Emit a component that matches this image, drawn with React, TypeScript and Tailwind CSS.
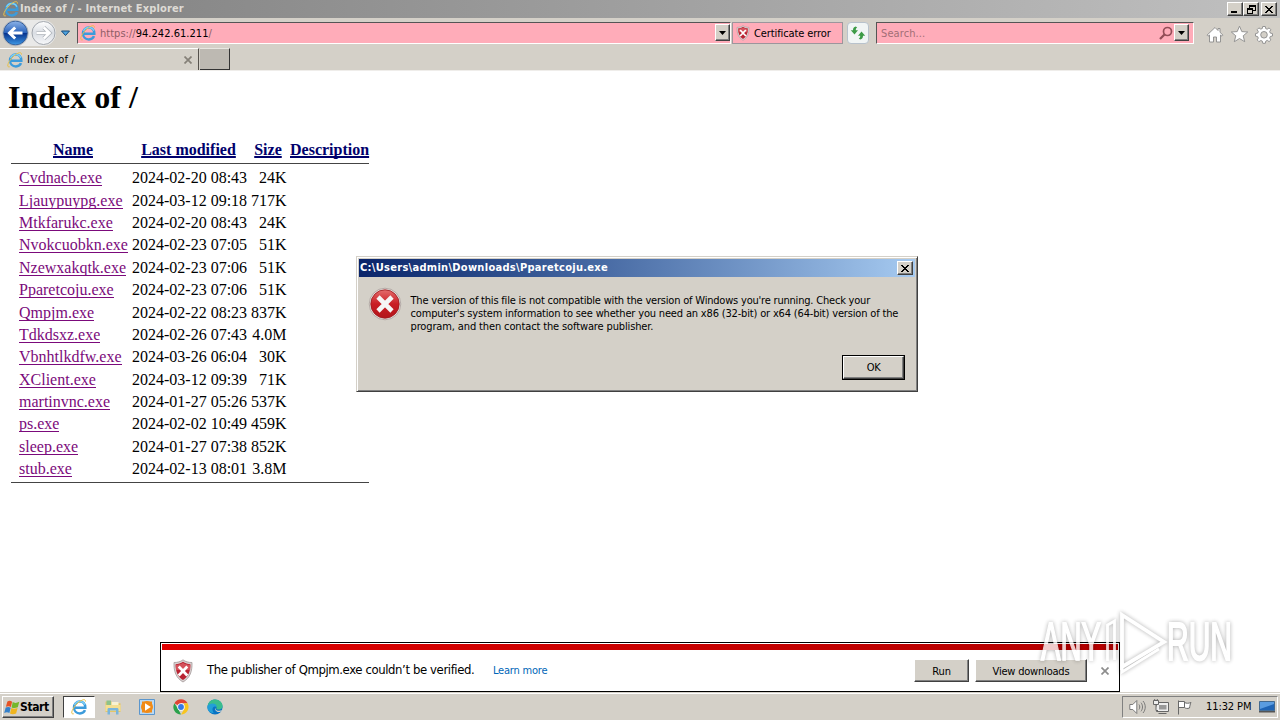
import React from "react";

interface FileRow {
  name: string;
  modified: string;
  size: string;
}

const files: FileRow[] = [
  { name: "Cvdnacb.exe", modified: "2024-02-20 08:43", size: "24K" },
  { name: "Ljauypuypg.exe", modified: "2024-03-12 09:18", size: "717K" },
  { name: "Mtkfarukc.exe", modified: "2024-02-20 08:43", size: "24K" },
  { name: "Nvokcuobkn.exe", modified: "2024-02-23 07:05", size: "51K" },
  { name: "Nzewxakqtk.exe", modified: "2024-02-23 07:06", size: "51K" },
  { name: "Pparetcoju.exe", modified: "2024-02-23 07:06", size: "51K" },
  { name: "Qmpjm.exe", modified: "2024-02-22 08:23", size: "837K" },
  { name: "Tdkdsxz.exe", modified: "2024-02-26 07:43", size: "4.0M" },
  { name: "Vbnhtlkdfw.exe", modified: "2024-03-26 06:04", size: "30K" },
  { name: "XClient.exe", modified: "2024-03-12 09:39", size: "71K" },
  { name: "martinvnc.exe", modified: "2024-01-27 05:26", size: "537K" },
  { name: "ps.exe", modified: "2024-02-02 10:49", size: "459K" },
  { name: "sleep.exe", modified: "2024-01-27 07:38", size: "852K" },
  { name: "stub.exe", modified: "2024-02-13 08:01", size: "3.8M" },
];

const raised =
  "border border-t-white border-l-white border-r-[#404040] border-b-[#404040] bg-[#d4d0c8] shadow-[inset_-1px_-1px_0_#808080]";

const IeIcon = ({ className }: { className?: string }) => (
  <svg viewBox="0 0 16 16" className={className} fill="none">
    <path
      d="M4 8.700h10.300C14.300 4.900 12 2.600 8.800 2.600 5.400 2.600 3 5.100 3 8.400c0 3.500 2.500 6 5.900 6 2.600 0 4.300-1.200 5.100-3.300"
      stroke="#3c9bdb"
      strokeWidth="2.500"
    />
    <path d="M3.500 6.200C4.500 3.800 6.500 2.500 8.800 2.500c2.400 0 4.200 1.200 5 3.200" stroke="#7fd0f5" strokeWidth="1.300" />
    <path
      d="M2.800 14.800c-1.500.4-2.300-.2-2-1.800C1.400 9.300 6.800 2.900 11.400 1c2-.8 3.300-.3 3 1.600"
      stroke="#e8c04a"
      strokeWidth="1"
    />
  </svg>
);

const ShieldIcon = ({ className }: { className?: string }) => (
  <svg viewBox="0 0 20 24" className={className}>
    <path
      d="M10 .8c2.500 2 5.500 2.700 9 2.700.3 9-2 15.500-9 19.500C3 19 .7 12.500 1 3.500c3.500 0 6.500-.7 9-2.700z"
      fill="#d9d2d2"
      stroke="#a59a9a"
      strokeWidth=".8"
    />
    <path
      d="M10 2.800c2.200 1.500 4.600 2.200 7.400 2.400 0 7.400-2.200 12.600-7.400 15.900C4.800 17.800 2.600 12.600 2.600 5.200 5.400 5 7.800 4.300 10 2.800z"
      fill="#b92332"
    />
    <path d="M2.800 6C5.500 5.800 8 5 10 3.700c2 1.300 4.500 2.100 7.200 2.300v5H3.100z" fill="#d5525c" />
    <path d="m5.700 7.500 8.600 9m0-9-8.600 9" stroke="#fff" strokeWidth="2.700" />
  </svg>
);

const CloseGlyph = () => (
  <svg viewBox="0 0 8 7" className="h-[7px] w-2" shapeRendering="crispEdges">
    <path d="M0 0h2v1H0zM6 0h2v1H6zM1 1h2v1H1zM5 1h2v1H5zM2 2h4v1H2zM3 3h2v1H3zM2 4h4v1H2zM1 5h2v1H1zM5 5h2v1H5zM0 6h2v1H0zM6 6h2v1H6z" />
  </svg>
);

const DropButton = () => (
  <div className={`flex h-[17px] w-[15px] items-center justify-center ${raised}`}>
    <svg viewBox="0 0 7 4" className="h-1 w-[7px]">
      <path d="M0 0h7L3.500 4z" />
    </svg>
  </div>
);

const TitleBar = () => (
  <div className="flex h-[18px] items-center bg-linear-to-r from-[#808080] to-[#c0c0c0] pr-[3px] pl-[3px]">
    <IeIcon className="mr-px h-4 w-4" />
    <span className="flex-1 pt-px text-[11px] font-bold tracking-[0.15px] text-[#dedbd5]">
      Index of / - Internet Explorer
    </span>
    <div className={`flex h-[14px] w-4 items-end pb-[2px] pl-[3px] ${raised}`}>
      <div className="h-[2px] w-[6px] bg-black" />
    </div>
    <div className={`flex h-[14px] w-4 items-center justify-center ${raised}`}>
      <svg viewBox="0 0 9 9" className="h-[9px] w-[9px]" fill="none" stroke="#000" shapeRendering="crispEdges">
        <path d="M2.500 3V.5h6v5H6M2 1.500h7M.5 3.500h5v5h-5zM0 4.500h6" />
      </svg>
    </div>
    <div className={`ml-[2px] flex h-[14px] w-4 items-center justify-center ${raised}`}>
      <CloseGlyph />
    </div>
  </div>
);

const NavButtons = () => (
  <svg viewBox="0 0 76 29" className="h-[29px] w-[76px] shrink-0">
    <defs>
      <linearGradient id="back" x2="0" y2="1">
        <stop offset="0" stopColor="#8eb4e8" />
        <stop offset=".48" stopColor="#2c65bd" />
        <stop offset=".52" stopColor="#07348f" />
        <stop offset="1" stopColor="#3f9ae6" />
      </linearGradient>
      <linearGradient id="fwd" x2="0" y2="1">
        <stop offset="0" stopColor="#fff" />
        <stop offset=".5" stopColor="#d9dde3" />
        <stop offset="1" stopColor="#f7f8fa" />
      </linearGradient>
    </defs>
    <path d="M15 2h28a13 13 0 0 1 0 26H15z" fill="#e9e9e8" />
    <circle cx="15.500" cy="15" r="12" fill="url(#back)" stroke="#315b97" />
    <circle cx="15.500" cy="15" r="12.800" fill="none" stroke="#a9afb8" strokeWidth=".8" />
    <path d="M22.500 15H10m5.200-5.500L9.500 15l5.700 5.500" fill="none" stroke="#fff" strokeWidth="3" />
    <circle cx="43.500" cy="15" r="11.500" fill="url(#fwd)" stroke="#a2a7ae" />
    <path
      d="M36.500 15H49m-5.200-5.500 5.700 5.500-5.700 5.500"
      fill="none"
      stroke="#abb0b7"
      strokeWidth="4"
    />
    <path d="M36.500 15H49m-5.200-5.500 5.700 5.500-5.700 5.500" fill="none" stroke="#fff" strokeWidth="2.600" />
    <path d="M61.500 13h8L65.500 17.500z" fill="#4da3e0" stroke="#174a78" />
  </svg>
);

const inset = "border border-t-[#555] border-l-[#555] border-r-white border-b-white";

const AddressBar = () => (
  <div className="flex h-[29px] items-center">
    <NavButtons />
    <div className={`ml-px flex h-[22px] w-[654px] items-center bg-[#ffacb9] pl-px ${inset}`}>
      <IeIcon className="mr-1 ml-px h-4 w-4" />
      <span className="flex-1 pt-[3px] text-[11px] tracking-[0.03px] text-[#8d5d65]">
        https://<span className="text-black">94.242.61.211</span>/
      </span>
      <DropButton />
    </div>
    <div className="ml-px flex h-[22px] w-[111px] items-center border border-[#9c959c] bg-[#ffacb9] pl-[3px]">
      <ShieldIcon className="h-4 w-[14px]" />
      <span className="ml-1 pt-[3px] text-[11px] tracking-[-0.1px]">Certificate error</span>
    </div>
    <div className="ml-1 flex h-[22px] w-[22px] items-center justify-center rounded-sm border border-[#b8c2cc] bg-[#f1f5f5]">
      <svg viewBox="0 0 16 14" className="h-[14px] w-4" fill="#3d9b46">
        <path d="M5.800.5C3.800.7 3 2.200 3 4.200H.8l3.700 4.300L8 4.200H5.800c0-1.500.3-2 1.400-2.600z" />
        <path d="M10.200 13.500c2-.2 2.800-1.700 2.800-3.700h2.200L11.500 5.500 8 9.800h2.200c0 1.500-.3 2-1.400 2.600z" />
      </svg>
    </div>
    <div className={`ml-[7px] flex h-[22px] w-[318px] items-center bg-[#ffacb9] pr-1 pl-1 ${inset}`}>
      <span className="flex-1 pt-[3px] text-[11px] tracking-[0.1px] text-[#a26e76]">Search...</span>
      <svg viewBox="0 0 14 14" className="mr-px h-[14px] w-[14px]" fill="none" stroke="#934d57">
        <circle cx="8.500" cy="5.500" r="4" strokeWidth="1.700" />
        <path d="m5.500 8.500-4.500 4.500" strokeWidth="2.300" />
      </svg>
      <DropButton />
    </div>
    <svg
      viewBox="0 0 72 20"
      className="mt-[3px] ml-[9px] h-5 w-[72px]"
      fill="#fff"
      stroke="#8b8b8b"
      strokeWidth=".9"
    >
      <path d="M12 3.500 4 11.200l1 1 1.500-1.200v7h4v-5h3v5h4v-7l1.500 1.200 1-1-3-2.900V4.500h-2v2z" />
      <path d="m36.500 2.200 2.300 5.400 5.900.4-4.500 3.800 1.500 5.900-5.200-3.200-5.200 3.200 1.500-5.900L28.300 8l5.900-.4z" />
      <path d="M59.700 2.500h2.600l.4 2.100 1.500.6 1.900-1.300 1.700 1.800-1.100 1.900.6 1.500 2.200.5V12l-2.200.5-.6 1.500 1.200 1.900-1.800 1.700-1.800-1.200-1.500.7-.5 2.200h-2.500l-.5-2.200-1.500-.6-1.900 1.200-1.700-1.800 1.100-1.800-.6-1.500-2.200-.5V9.600l2.200-.5.6-1.500-1.200-1.900 1.800-1.800 1.900 1.200 1.500-.6z" />
      <circle cx="61" cy="10.800" r="3.300" fill="#d4d0c8" />
    </svg>
  </div>
);

const TabBar = () => (
  <div className="flex h-[24px] items-start border-b border-[#efedea] pt-px">
    <div className="flex h-[22px] w-[199px] items-center border-t border-r border-t-white border-r-[#55514c] pl-[7px]">
      <IeIcon className="h-4 w-4" />
      <span className="ml-1 flex-1 pt-[2px] text-[11px] tracking-[0.15px]">Index of /</span>
      <svg viewBox="0 0 8 8" className="mr-[6px] h-2 w-2" stroke="#858078" strokeWidth="1.700">
        <path d="m.5.5 7 7m0-7-7 7" />
      </svg>
    </div>
    <div className="ml-px h-[22px] w-[30px] border-r border-b border-t border-t-[#e9e7e2] border-r-[#333] border-b-[#333] bg-[#bdb9b2]" />
  </div>
);

const headerLink =
  "text-center font-bold text-[#00006c] underline decoration-2 [text-decoration-skip-ink:none]";

const DirectoryListing = () => (
  <div className="pt-[6px] pl-2 font-['Liberation_Serif',serif] text-[16px]">
    <h1 className="text-[32px] leading-[40px] font-bold">Index of /</h1>
    <div className="mt-[21px] ml-[3px] w-[358px]">
      <div className="grid h-[26px] grid-cols-[108px_115px_36px_79px] items-center gap-1 border-b border-[#444] pb-px pl-2">
        <span className={headerLink}>Name</span>
        <span className={headerLink}>Last modified</span>
        <span className={headerLink}>Size</span>
        <span className={headerLink}>Description</span>
      </div>
      <div className="border-b border-[#444] pt-[3px] pb-[2px]">
        {files.map((file) => (
          <div
            key={file.name}
            className="grid h-[22.4px] grid-cols-[109px_115px_35.5px] items-center gap-1 pl-2 leading-[18px] whitespace-nowrap"
          >
            <span className="mb-px h-[17px] justify-self-start overflow-hidden border-b border-[#7b0a7b] text-[#7b0a7b]">
              {file.name}
            </span>
            <span>{file.modified}</span>
            <span className="text-right">{file.size}</span>
          </div>
        ))}
      </div>
    </div>
  </div>
);

const DownloadBar = () => (
  <div className="mx-auto mt-auto h-[50px] w-[960px] border border-black bg-white p-px">
    <div className="h-[6px] bg-linear-to-r from-[#e00000] to-[#b40000]" />
    <div className="flex h-[41px] items-center pl-[10px]">
      <ShieldIcon className="h-6 w-[22px]" />
      <span className="ml-[13px] w-[286px] pb-[2px] text-[13px] tracking-[-0.4px] whitespace-nowrap">
        The publisher of Qmpjm.exe couldn’t be verified.
      </span>
      <span className="flex-1 pt-px text-[11px] tracking-[-0.2px] text-[#0066b8]">Learn more</span>
      <button className={`h-[23px] w-[55px] pt-[3px] text-[11px] tracking-[-0.1px] ${raised}`}>Run</button>
      <button className={`ml-[6px] h-[23px] w-[112px] pt-[3px] text-[11px] tracking-[-0.2px] ${raised}`}>
        View downloads
      </button>
      <svg viewBox="0 0 8 8" className="mr-[9px] ml-[14px] h-2 w-2" stroke="#8d8d8d" strokeWidth="1.700">
        <path d="m.5.5 7 7m0-7-7 7" />
      </svg>
    </div>
  </div>
);

const ErrorDialog = () => (
  <div className="absolute top-[256px] left-[356px] h-[136px] w-[562px] border border-t-[#d4d0c8] border-r-[#404040] border-b-[#404040] border-l-[#d4d0c8] bg-[#d4d0c8] p-[2px] shadow-[inset_1px_1px_0_#fff,inset_-1px_-1px_0_#808080]">
    <div className="flex h-[18px] items-center bg-linear-to-r from-[#0a246a] to-[#a6caf0] pr-[2px] pl-px">
      <span className="flex-1 pt-px text-[11px] font-bold tracking-[0.29px] text-white">
        C:\Users\admin\Downloads\Pparetcoju.exe
      </span>
      <div className={`flex h-[14px] w-4 items-center justify-center ${raised}`}>
        <CloseGlyph />
      </div>
    </div>
    <div className="flex pt-[10px] pl-[9px]">
      <svg viewBox="0 0 34 34" className="h-[34px] w-[34px]">
        <defs>
          <linearGradient id="stop" x2="0" y2="1">
            <stop offset="0" stopColor="#e46c6c" />
            <stop offset=".5" stopColor="#c91d24" />
            <stop offset="1" stopColor="#b3141a" />
          </linearGradient>
        </defs>
        <circle cx="17" cy="17" r="15.800" fill="#e4dcda" stroke="#a99f9c" strokeWidth=".8" />
        <circle cx="17" cy="17" r="14.200" fill="url(#stop)" stroke="#9c1b1f" strokeWidth=".8" />
        <path d="m10 10 14 14m0-14-14 14" stroke="#f5f5f5" strokeWidth="4.600" />
      </svg>
      <p className="ml-[8.500px] pt-[7px] text-[11px] leading-[13px] whitespace-nowrap">
        <span className="tracking-[-0.2px]">
          The version of this file is not compatible with the version of Windows you're running. Check your
        </span>
        <br />
        <span className="tracking-[-0.17px]">
          computer's system information to see whether you need an x86 (32-bit) or x64 (64-bit) version of the
        </span>
        <br />
        <span className="tracking-[-0.13px]">program, and then contact the software publisher.</span>
      </p>
    </div>
    <div className="mt-[22px] flex justify-end pr-[10px]">
      <button className="h-[25px] w-[63px] border border-black">
        <span className={`flex h-full items-center justify-center pt-[2px] text-[11px] tracking-[-0.5px] ${raised}`}>
          OK
        </span>
      </button>
    </div>
  </div>
);

const Watermark = () => (
  <svg
    viewBox="0 0 220 70"
    className="absolute top-[606px] left-[1030px] h-[70px] w-[220px] overflow-visible drop-shadow-[0_0_2px_rgba(0,0,0,0.4)]"
    fill="none"
    stroke="#fff"
    opacity=".8"
  >
    <g fontFamily="'Liberation Sans', sans-serif" fontSize="53" strokeWidth="2" fill="#fff">
      <text x="11" y="54" textLength="60" lengthAdjust="spacingAndGlyphs">
        ANY
      </text>
      <text x="137" y="54" textLength="65" lengthAdjust="spacingAndGlyphs">
        RUN
      </text>
    </g>
    <path d="M92 9v52l42-25z" strokeWidth="3.800" />
    <path d="M84.500 54V15l-7 4v36m14.500 1v10l37-23" strokeWidth="2.800" />
  </svg>
);

const Taskbar = () => (
  <div className="flex h-[27px] items-center border-t border-white bg-[#d4d0c8] pr-[2px] pl-[2px]">
    <div className={`flex h-[22px] w-[52px] items-center pl-px ${raised}`}>
      <svg viewBox="0 0 16 15" className="h-[15px] w-4">
        <path d="M3.400 1.500C5.200.3 6.800.7 8.100 1.700L6.900 7C5.500 6 3.800 5.900 1.900 6.800z" fill="#e65325" />
        <path d="M8.700 2.100c1.700 1.100 3.900 1.100 6.600-.3l-1.500 5.400c-2.300 1-4.400 1.100-6.200.2z" fill="#75b72b" />
        <path d="M1.700 7.500c2-.9 3.700-.7 5 .2l-1.300 5.400C4 12 2.300 11.900.2 12.900z" fill="#3480ca" />
        <path d="M7.400 8.100c1.700.9 3.900.9 6.200-.1l-1.500 5.500c-2.300 1-4.500 1-6.100 0z" fill="#f0b51e" />
      </svg>
      <span className="text-[12px] font-bold tracking-[-0.4px]">Start</span>
    </div>
    <div className="ml-[9px] flex h-[22px] w-[32px] items-center justify-center border border-t-[#404040] border-r-white border-b-white border-l-[#404040] bg-white">
      <IeIcon className="h-4 w-4" />
    </div>
    <svg viewBox="0 0 16 16" className="ml-[10px] h-4 w-4">
      <path d="M.5 2.500h6L8 4.200h7.500V13H.5z" fill="#e5c667" />
      <path d="M1.500 1.500H6V6H1.500z" fill="#8dc28a" />
      <path d="M6.500 3h7v4h-7z" fill="#f8f2d2" />
      <path d="M.5 6h15v6H.5z" fill="#f4df92" />
      <path d="M2.500 15.500v-5C2.500 9.500 3 9 4 9h8c1 0 1.500.5 1.500 1.500v5H11v-4H5v4z" fill="#79b5dc" />
    </svg>
    <svg viewBox="0 0 16 16" className="ml-[18px] h-4 w-4">
      <path d="M.5.500h15v15H.5z" fill="#b9d9f4" stroke="#5b96cd" />
      <path d="M3 2.500h10v11H3z" fill="#f18b17" />
      <circle cx="8" cy="8" r="6" fill="#f18b17" />
      <path d="M6 4.300v7.400L11.800 8z" fill="#fff" />
    </svg>
    <svg viewBox="0 0 16 16" className="ml-[18px] h-4 w-4">
      <path d="M8 8 1.400 4.200A7.600 7.600 0 0 1 14.600 4.200H8z" fill="#df4434" />
      <path d="M1.400 4.200 5.200 10 8 15.600A7.600 7.600 0 0 1 1.400 4.200z" fill="#2ba14b" />
      <path d="M14.600 4.300A7.600 7.600 0 0 1 8 15.600l3.300-5.700L11 4.300z" fill="#f8c51e" />
      <circle cx="8" cy="8" r="3.700" fill="#fff" />
      <circle cx="8" cy="8" r="2.900" fill="#3579e6" />
    </svg>
    <svg viewBox="0 0 16 16" className="ml-[18px] h-4 w-4">
      <circle cx="8" cy="8" r="7.600" fill="#0873c4" />
      <path d="M.6 7C1.200 3 4.200.4 8 .4c4.500 0 7.600 3.200 7.600 6.500 0 2.500-2 3.700-4 3.700-2.200 0-2.500-.8-2-1.600C9.900 6.500 6 3.300.6 7z" fill="#39bd8e" />
      <path d="M.6 7C3 3.400 9.800 4 9.700 8c-3-2-6 1.500-3 5.800C3 14.500-.2 11 .6 7z" fill="#239fd8" />
      <path d="M15.500 11c-3 1.500-7 1-7.200-2 -.8 1.500.7 3.800 3.200 4.100 1.700.1 3-.8 4-2.100z" fill="#d4d0c8" />
    </svg>
    <div className="ml-auto flex h-[22px] w-[156px] items-center border border-t-[#808080] border-r-white border-b-white border-l-[#808080] pl-[6px]">
      <svg viewBox="0 0 18 16" className="h-4 w-[18px]" fill="#fff" stroke="#6f6f6f" strokeWidth=".9">
        <path d="M.8 5.500h3l4-4v13l-4-4h-3z" />
        <path d="M10 5.500c1 1.500 1 3.500 0 5M12 3.700c2 2.500 2 6 0 8.600M14 2c3 3.500 3 8.500 0 12" fill="none" />
      </svg>
      <svg viewBox="0 0 18 16" className="ml-[5px] h-4 w-[18px]" fill="#eee" stroke="#666">
        <path d="M4.500 3.500h12v9h-12zM6.500 14.500h8" />
        <path d="M7 6h7.500v4.500H7z" fill="#999" stroke="none" />
        <path d="M1.500 1.500h5v4h-5zM4 5.500v6h2M2.700 0v2M5.300 0v2" />
      </svg>
      <svg viewBox="0 0 17 16" className="ml-[6px] h-4 w-[17px]" fill="#fff" stroke="#696969">
        <path d="M2.500 15.500V1.500M2.500 2.500h6v6h-6zM8.500 3.500c2 1 4 1 6.500 0-1 2-1 3-1.500 5.500-2 .8-4 .5-5-.5" />
      </svg>
      <span className="ml-[13px] pt-px text-[11px] tracking-[-0.1px] whitespace-nowrap">11:32 PM</span>
      <svg viewBox="0 0 16 12" className="mr-[2px] ml-auto h-3 w-4">
        <path d="M.5.500h15v9.200H.5z" fill="#1f64b5" stroke="#42698f" />
        <path d="M1 1h14v2L1 8z" fill="#5a9ce0" />
        <path d="M0 10h16v1.500H0z" fill="#555" />
      </svg>
    </div>
  </div>
);

const App: React.FC = () => {
  return (
    <div className="relative flex h-[720px] w-[1280px] flex-col overflow-hidden bg-white font-['DejaVu_Sans_Condensed','DejaVu_Sans',sans-serif] text-black">
      <div className="bg-[#d4d0c8]">
        <TitleBar />
        <AddressBar />
        <TabBar />
      </div>
      <main className="flex flex-1 flex-col">
        <DirectoryListing />
        <DownloadBar />
        <div className="h-px bg-[#d4d0c8]" />
      </main>
      <Taskbar />
      <ErrorDialog />
      <Watermark />
    </div>
  );
};

export default App;
